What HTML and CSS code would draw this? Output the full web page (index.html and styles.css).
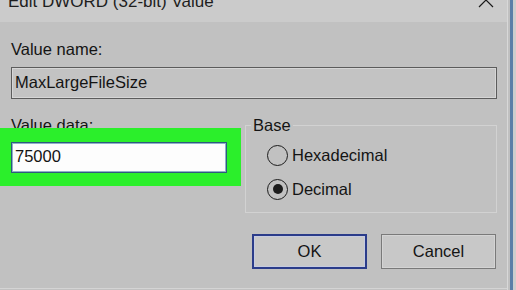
FILE: index.html
```html
<!DOCTYPE html>
<html lang="en">
<head>
    <meta charset="UTF-8">
    <meta name="viewport" content="width=device-width, initial-scale=1.0">
    <title>Edit DWORD (32-bit) Value</title>
    <link rel="stylesheet" href="styles.css">
</head>
<body>
    <div class="window">
        <div class="dialog">
            <div class="titlebar">
                <span class="title">Edit DWORD (32-bit) Value</span>
                <svg class="close" width="16" height="16" viewBox="0 0 16 16">
                    <path d="M1 1 L15 15 M15 1 L1 15" stroke="#1a1a1a" stroke-width="1.2" fill="none"/>
                </svg>
            </div>

            <div class="content">
                <div class="label">Value name:</div>
                <div class="readonly">MaxLargeFileSize</div>

                <div class="lower">
                    <div class="data">
                        <div class="label">Value data:</div>
                        <div class="highlight">
                            <div class="input">75000</div>
                        </div>
                    </div>

                    <fieldset class="base">
                        <legend>Base</legend>
                        <div class="radio"><span class="dot"></span>Hexadecimal</div>
                        <div class="radio"><span class="dot checked"></span>Decimal</div>
                    </fieldset>
                </div>

                <div class="actions">
                    <button class="btn default">OK</button>
                    <button class="btn">Cancel</button>
                </div>
            </div>
            <div class="bottom-line"></div>
        </div>
        <div class="edge"></div>
    </div>
</body>
</html>
```

FILE: styles.css
```css
* {
    box-sizing: border-box;
    margin: 0;
    padding: 0;
}

body {
    font-family: "Liberation Sans", Arial, sans-serif;
    background-color: #c1c1c1;
    width: 516px;
    height: 290px;
    overflow: hidden;
    color: #141414;
}

.window {
    display: flex;
    height: 290px;
}

.dialog {
    width: 507px;
    display: flex;
    flex-direction: column;
}

.titlebar {
    height: 22px;
    background-color: #cbcbcb;
    display: flex;
    justify-content: space-between;
    align-items: flex-start;
    padding: 0 13px 0 8px;
}

.title {
    font-size: 17px;
    line-height: 20px;
    margin-top: -8px;
    color: #1e1e1e;
}

.close {
    margin-top: -8px;
}

.content {
    padding: 0 10px 0 11px;
}

.label {
    font-size: 16.5px;
    line-height: 20px;
}

.content > .label {
    margin-top: 17px;
}

.readonly {
    margin-top: 8px;
    height: 32px;
    border: 1px solid #5c5c5c;
    box-shadow: inset 0 0 0 1px #d6d6d6;
    background-color: #c3c3c3;
    font-size: 16.5px;
    line-height: 28px;
    padding: 0 3px;
}

.lower {
    display: flex;
    gap: 4px;
    margin-top: 16px;
}

.data {
    width: 230px;
}

.highlight {
    position: relative;
    margin: -7px 0 0 -11px;
    width: 241px;
    height: 58px;
    background-color: #2bef2b;
    padding: 14px 0 0 11px;
}

.input {
    width: 216px;
    height: 31px;
    background-color: #fdfdfd;
    border: 1px solid #2f5a7e;
    box-shadow: inset 0 0 0 1px #8fb0c8;
    font-size: 16.5px;
    line-height: 27px;
    padding: 0 3px;
}

.base {
    width: 252px;
    border: 1px solid #d2d2d2;
    padding: 3px 0 6px 21px;
}

.base legend {
    font-size: 16.5px;
    line-height: 20px;
    margin-left: -16px;
    padding: 0 2px;
}

.radio {
    height: 34px;
    display: flex;
    align-items: center;
    gap: 4px;
    font-size: 16.5px;
    line-height: 20px;
}

.dot {
    width: 21px;
    height: 21px;
    border: 1.7px solid #1c1c1c;
    border-radius: 50%;
    display: flex;
    align-items: center;
    justify-content: center;
}

.dot.checked::after {
    content: '';
    width: 10px;
    height: 10px;
    border-radius: 50%;
    background-color: #1c1c1c;
}

.actions {
    display: flex;
    justify-content: flex-end;
    gap: 14px;
    margin-top: 21px;
    padding-right: 1px;
}

.btn {
    width: 115px;
    height: 35px;
    font-family: inherit;
    font-size: 16.5px;
    color: #141414;
    background-color: #c8c8c8;
    border: 1px solid #7a7a7a;
    box-shadow: inset 0 0 0 1px #d4d4d4;
}

.btn.default {
    border: 2px solid #2b3c8a;
    box-shadow: inset 0 0 0 1px #c6cbe0;
}

.bottom-line {
    margin-top: auto;
    margin-bottom: 1px;
    height: 1px;
    background-color: #d4d4d4;
}

.edge {
    width: 9px;
    background: linear-gradient(to right,
        #d8d8d8 0 1px,
        #c0c0c0 1px 3px,
        #5a7ea8 3px 6px,
        #cdcdcd 6px);
}
```
